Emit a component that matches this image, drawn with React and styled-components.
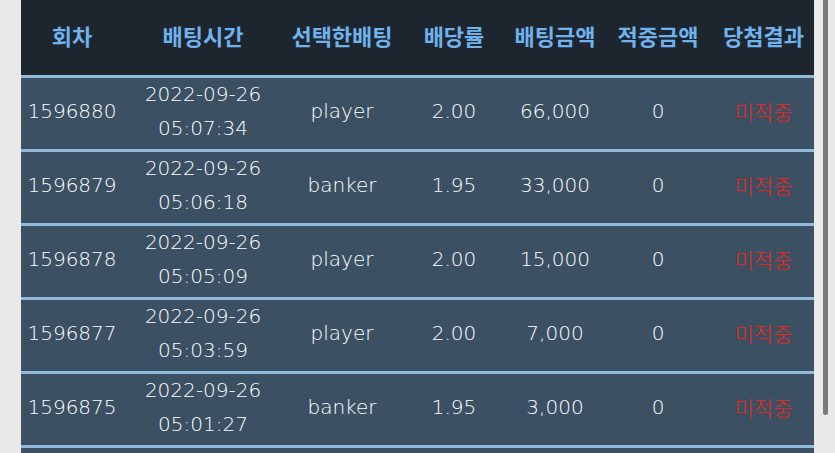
import React from "react";
import styled, { createGlobalStyle } from "styled-components";

const rows = [
  { id: "1596880", date: "2022-09-26", time: "05:07:34", pick: "player", odds: "2.00", amount: "66,000" },
  { id: "1596879", date: "2022-09-26", time: "05:06:18", pick: "banker", odds: "1.95", amount: "33,000" },
  { id: "1596878", date: "2022-09-26", time: "05:05:09", pick: "player", odds: "2.00", amount: "15,000" },
  { id: "1596877", date: "2022-09-26", time: "05:03:59", pick: "player", odds: "2.00", amount: "7,000" },
  { id: "1596875", date: "2022-09-26", time: "05:01:27", pick: "banker", odds: "1.95", amount: "3,000" },
  { id: "1596874", date: "2022-09-26", time: "05:00:12", pick: "player", odds: "2.00", amount: "5,000" },
];

const heads = [
  { label: "회차", w: 102 },
  { label: "배팅시간", w: 160 },
  { label: "선택한배팅", w: 118 },
  { label: "배당률", w: 106 },
  { label: "배팅금액", w: 96 },
  { label: "적중금액", w: 110 },
  { label: "당첨결과", w: 101 },
];

export default function App() {
  return (
    <Page>
      <GlobalStyle />
      <Main>
        <Table>
          <colgroup>
            {heads.map((h) => (
              <col key={h.label} style={{ width: h.w }} />
            ))}
          </colgroup>
          <thead>
            <tr>
              {heads.map((h) => (
                <HeadCell key={h.label}>{h.label}</HeadCell>
              ))}
            </tr>
          </thead>
          <tbody>
            {rows.map((r) => (
              <Row key={r.id}>
                <Cell>{r.id}</Cell>
                <Cell>
                  {r.date}
                  <br />
                  {r.time}
                </Cell>
                <Cell>{r.pick}</Cell>
                <Cell>{r.odds}</Cell>
                <Cell>{r.amount}</Cell>
                <Cell>0</Cell>
                <Cell $miss>미적중</Cell>
              </Row>
            ))}
          </tbody>
        </Table>
      </Main>
      <Rail>
        <Thumb />
      </Rail>
    </Page>
  );
}

const GlobalStyle = createGlobalStyle`
  html, body {
    margin: 0;
    padding: 0;
    background: #e9e9e9;
    font-family: "DejaVu Sans", "Noto Sans CJK KR", sans-serif;
    overflow: hidden;
  }
`;

const Page = styled.div`
  display: flex;
  height: 453px;
  overflow: hidden;
  background: #e9e9e9;
`;

const Main = styled.div`
  flex: 1;
  padding-left: 21px;
  overflow: hidden;
`;

const Rail = styled.div`
  width: 14px;
  flex-shrink: 0;
  display: flex;
  justify-content: flex-start;
  padding-left: 2px;
  box-sizing: border-box;
`;

const Thumb = styled.div`
  width: 5px;
  height: 415px;
  background: #7a7a7a;
  border-radius: 0 0 3px 3px;
`;

const Table = styled.table`
  width: 793px;
  border-collapse: collapse;
  table-layout: fixed;
`;

const HeadCell = styled.th`
  height: 70px;
  padding: 0 0 5px;
  background: #1d252e;
  color: #6fb2ec;
  font-family: "Noto Sans CJK KR", sans-serif;
  font-size: 22px;
  font-weight: 700;
  text-align: center;
  white-space: nowrap;
`;

const Row = styled.tr`
  background: #3c5064;
  border-top: 3px solid #8fbadc;
`;

const Cell = styled.td`
  height: 67px;
  padding: 0 0 4px;
  text-align: center;
  vertical-align: middle;
  line-height: 33.5px;
  font-weight: 300;
  color: ${(p) => (p.$miss ? "#e8281e" : "#ffffff")};
  font-family: ${(p) =>
    p.$miss ? '"Noto Sans CJK KR", sans-serif' : '"DejaVu Sans", "Noto Sans CJK KR", sans-serif'};
  font-size: ${(p) => (p.$miss ? "21px" : "20px")};
  white-space: nowrap;
`;
